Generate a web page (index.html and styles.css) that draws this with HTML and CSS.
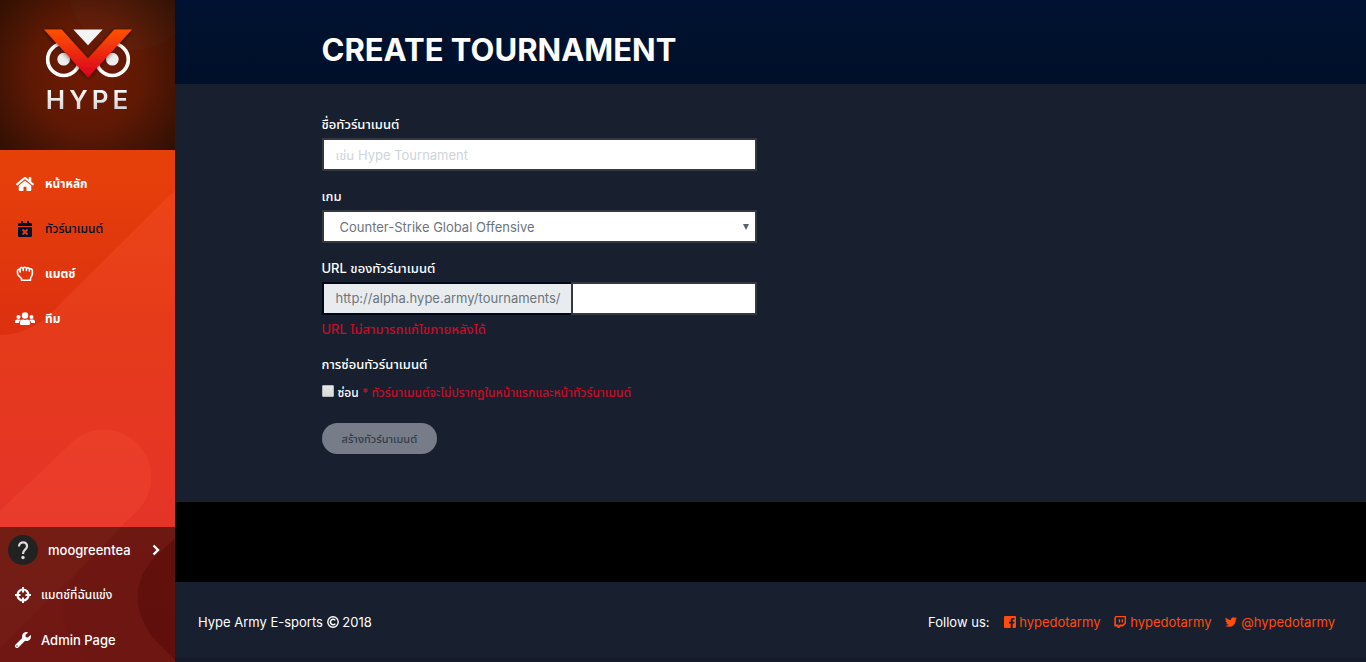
FILE: index.html
```html
<!DOCTYPE html>
<html lang="th">
<head>
    <meta charset="UTF-8">
    <meta name="viewport" content="width=device-width, initial-scale=1.0">
    <title>Create Tournament</title>
    <link rel="stylesheet" href="styles.css">
</head>
<body>
    <div class="page">
        <aside class="sidebar">
            <svg class="sidebar-shapes" viewBox="0 0 175 662" preserveAspectRatio="xMidYMin slice" aria-hidden="true">
                <path d="M175 190 L62 302 Q34 335 0 335 V662 H175 Z" fill="#ff5a3c" fill-opacity=".25"/>
                <path d="M0 511 L70 444 A47 47 0 0 1 138 510 L0 648 Z" fill="#ff5a3c" fill-opacity=".2"/>
                <circle cx="132" cy="-14" r="64" fill="#ff9060" fill-opacity=".3"/>
                <path d="M138 510 L82 568 Q40 612 88 662 H175 V527 H121 Z" fill="#8a0808" fill-opacity=".08"/>
                <path class="shade" d="M175 538 L150 562 Q124 597 152 637 L175 660 Z"/>
            </svg>
            <a class="logo" href="#">
                <svg class="owl" viewBox="0 0 264 146" aria-hidden="true">
                    <defs>
                        <linearGradient id="beak" x1="0" y1="0" x2="0" y2="1">
                            <stop offset="0" stop-color="#ff5200"/>
                            <stop offset="1" stop-color="#d8001f"/>
                        </linearGradient>
                        <filter id="shadow" x="-20%" y="-20%" width="140%" height="150%">
                            <feDropShadow dx="0" dy="3" stdDeviation="6" flood-color="#000" flood-opacity=".6"/>
                        </filter>
                    </defs>
                    <g fill="none" stroke="#fff" stroke-width="11">
                        <circle cx="59" cy="91" r="48"/>
                        <circle cx="205" cy="91" r="48"/>
                    </g>
                    <circle cx="59" cy="90" r="19" fill="#eee"/>
                    <circle cx="205" cy="90" r="19" fill="#eee"/>
                    <path d="M0 1h53l79 87 79-87h53L132 145z" fill="url(#beak)" filter="url(#shadow)"/>
                    <path d="M88 1h88l-44 47z" fill="#f4f4f4"/>
                </svg>
                <span class="logo-text">HYPE</span>
            </a>
            <nav class="menu">
                <a class="menu-item" href="#">
                    <svg class="icon" viewBox="0 0 576 512"><path d="M488 312.7V456c0 13.3-10.7 24-24 24H348c-6.6 0-12-5.4-12-12V356c0-6.6-5.4-12-12-12h-72c-6.6 0-12 5.4-12 12v112c0 6.6-5.4 12-12 12H112c-13.3 0-24-10.7-24-24V312.7c0-3.6 1.6-7 4.4-9.3l188-154.8c4.4-3.6 10.8-3.6 15.3 0l188 154.8c2.7 2.3 4.3 5.7 4.3 9.3zm83.6-60.9L488 182.9V44.4c0-6.6-5.4-12-12-12h-56c-6.6 0-12 5.4-12 12V117l-89.5-73.7c-17.7-14.6-43.3-14.6-61 0L4.4 251.8c-5.1 4.2-5.8 11.8-1.6 16.9l25.5 31c4.2 5.1 11.8 5.8 16.9 1.6l235.2-193.7c4.4-3.6 10.8-3.6 15.3 0l235.2 193.7c5.1 4.2 12.7 3.5 16.9-1.6l25.5-31c4.2-5.2 3.4-12.7-1.7-16.9z"/></svg>
                    <span>หน้าหลัก</span>
                </a>
                <a class="menu-item active" href="#">
                    <svg class="icon" viewBox="0 0 448 512"><path d="M436 160H12c-6.600 0-12-5.400-12-12v-36c0-26.500 21.500-48 48-48h48V12c0-6.600 5.400-12 12-12h40c6.600 0 12 5.400 12 12v52h128V12c0-6.600 5.400-12 12-12h40c6.600 0 12 5.400 12 12v52h48c26.500 0 48 21.500 48 48v36c0 6.600-5.400 12-12 12zM12 192h424c6.600 0 12 5.400 12 12v260c0 26.500-21.500 48-48 48H48c-26.500 0-48-21.500-48-48V204c0-6.600 5.400-12 12-12zm257.300 160l48.100-48.100c4.700-4.700 4.700-12.300 0-17l-28.300-28.300c-4.700-4.700-12.300-4.700-17 0L224 306.700l-48.100-48.100c-4.700-4.700-12.300-4.700-17 0l-28.300 28.300c-4.700 4.700-4.700 12.300 0 17l48.100 48.100-48.100 48.100c-4.700 4.700-4.700 12.300 0 17l28.300 28.300c4.700 4.700 12.300 4.700 17 0l48.100-48.100 48.100 48.100c4.700 4.700 12.300 4.700 17 0l28.300-28.300c4.700-4.700 4.700-12.300 0-17L269.300 352z"/></svg>
                    <span>ทัวร์นาเมนต์</span>
                </a>
                <a class="menu-item" href="#">
                    <svg class="icon" viewBox="0 0 18 16"><path fill="none" stroke="currentColor" stroke-width="1.600" stroke-linejoin="round" stroke-linecap="round" d="M5.500 14.200v-1.700L2.300 9.300C1.600 8.500 1.500 7.800 1.500 7V4.800c0-1.300 1.600-1.800 2.600-.9V3c0-1.500 2.300-1.900 3-.6C7.600.9 10 .9 10.500 2.400c.8-1 2.700-.6 2.900.7 1.300-.7 3 0 3 1.500v3.200c0 2-1.700 3.200-1.900 4.700v1.700zM4.100 3.900V6M7.200 2.500v2M10.400 2.500v2M13.400 3.200v2"/></svg>
                    <span>แมตช์</span>
                </a>
                <a class="menu-item" href="#">
                    <svg class="icon wide" viewBox="0 0 20 14"><circle cx="3.500" cy="5" r="2"/><circle cx="16.500" cy="5" r="2"/><circle cx="10" cy="3.500" r="3.200"/><path d="M0 11V9.500Q0 7.500 2 7.500H4.600Q5.200 7.500 5.700 7.900 4 9 3.900 11zM20 11V9.500Q20 7.500 18 7.500H15.400Q14.800 7.500 14.300 7.900 16 9 16.100 11zM5 12V10.500Q5 7.500 8 7.500 10 8.300 12 7.500 15 7.500 15 10.500V12Q15 13 14 13H6Q5 13 5 12z"/></svg>
                    <span>ทีม</span>
                </a>
            </nav>
            <nav class="account">
                <a class="account-item" href="#">
                    <span class="avatar"><svg viewBox="0 0 30 30" aria-hidden="true"><path d="M11 11.500C11 6 19.500 6 19 11.500C19 14.500 15 14.500 15 19" fill="none" stroke="currentColor" stroke-width="2.200"/><circle cx="15" cy="22.500" r="1.700" fill="currentColor"/></svg></span>
                    <span class="username">moogreentea</span>
                    <svg class="chevron" viewBox="0 0 8 12" aria-hidden="true"><path d="M1.500 1.500 6 6 1.500 10.500" fill="none" stroke="currentColor" stroke-width="2.400"/></svg>
                </a>
                <a class="account-item thai" href="#">
                    <svg class="icon" viewBox="0 0 16 16"><circle cx="8" cy="8" r="5.500" fill="none" stroke="currentColor" stroke-width="2.200"/><path d="M7 0h2v5.500H7zM7 10.500h2V16H7zM0 7h5.500v2H0zM10.500 7H16v2h-5.500z"/></svg>
                    <span>แมตช์ที่ฉันแข่ง</span>
                </a>
                <a class="account-item" href="#">
                    <svg class="icon" viewBox="0 0 512 512"><path d="M507.730 109.100c-2.240-9.030-13.540-12.090-20.120-5.510l-74.360 74.360-67.880-11.310-11.310-67.880 74.360-74.360c6.620-6.620 3.430-17.900-5.660-20.160-47.380-11.740-99.550.910-136.580 37.930-39.640 39.640-50.550 97.100-34.050 147.200L18.740 402.760c-24.990 24.990-24.990 65.510 0 90.500 24.990 24.990 65.510 24.990 90.500 0l213.210-213.210c50.120 16.710 107.470 5.680 147.370-34.220 37.070-37.070 49.700-89.320 37.910-136.730zM64 472c-13.250 0-24-10.750-24-24 0-13.260 10.750-24 24-24s24 10.740 24 24c0 13.250-10.750 24-24 24z"/></svg>
                    <span>Admin Page</span>
                </a>
            </nav>
        </aside>
        <div class="main">
            <header class="title-bar">
                <h1 class="container">CREATE TOURNAMENT</h1>
            </header>
            <main class="content">
                <div class="container columns">
                    <form class="form">
                        <div class="field">
                            <label for="name">ชื่อทัวร์นาเมนต์</label>
                            <input class="control" type="text" id="name" placeholder="เช่น Hype Tournament">
                        </div>
                        <div class="field">
                            <label for="game">เกม</label>
                            <select class="control" id="game">
                                <option>Counter-Strike Global Offensive</option>
                            </select>
                        </div>
                        <div class="field">
                            <label for="url">URL ของทัวร์นาเมนต์</label>
                            <div class="url-group">
                                <span class="prefix">http://alpha.hype.army/tournaments/</span>
                                <input class="control" type="text" id="url">
                            </div>
                            <small class="warning">URL ไม่สามารถแก้ไขภายหลังได้</small>
                        </div>
                        <fieldset class="field">
                            <legend>การซ่อนทัวร์นาเมนต์</legend>
                            <div class="check">
                                <input type="checkbox" id="hidden">
                                <label for="hidden">ซ่อน <span class="danger">* ทัวร์นาเมนต์จะไม่ปรากฏในหน้าแรกและหน้าทัวร์นาเมนต์</span></label>
                            </div>
                        </fieldset>
                        <button class="submit" type="submit" disabled>สร้างทัวร์นาเมนต์</button>
                    </form>
                </div>
            </main>
            <footer class="footer">
                <p class="copyright">Hype Army E-sports
                    <svg viewBox="0 0 12 12" aria-label="copyright"><circle cx="6" cy="6" r="5.200" fill="none" stroke="currentColor" stroke-width="1.400"/><path d="M8.300 4.400a2.700 2.700 0 1 0 0 3.200" fill="none" stroke="currentColor" stroke-width="1.600"/></svg>
                    2018</p>
                <div class="social">
                    <span>Follow us:</span>
                    <a href="#">
                        <svg viewBox="0 0 12 12"><path d="M1 0h10a1 1 0 0 1 1 1v10a1 1 0 0 1-1 1H8.700V7.500h1.500l.3-1.800H8.700V4.500c0-.6.3-.9 1-.9h.8V2.100C10 2 9.600 2 9 2 7.500 2 6.700 2.900 6.700 4.300v1.400H5v1.800h1.700V12H1a1 1 0 0 1-1-1V1a1 1 0 0 1 1-1z"/></svg>
                        hypedotarmy
                    </a>
                    <a href="#">
                        <svg viewBox="0 0 12 12"><path fill-rule="evenodd" d="M1.300 0H12v7.400L9 10.400H6.700L5 12H3.400v-1.600H.3V2.200zM1.900 1.300v7.300h2.500v1.500l1.500-1.500h2.800l1.900-1.900V1.300zM4.800 3.200h1.300v3.300H4.800zM7.700 3.200H9v3.300H7.700z"/></svg>
                        hypedotarmy
                    </a>
                    <a href="#">
                        <svg viewBox="0 32 512 448"><path d="M459.370 151.716c.325 4.548.325 9.097.325 13.645 0 138.720-105.583 298.558-298.558 298.558-59.452 0-114.680-17.219-161.137-47.106 8.447.974 16.568 1.299 25.340 1.299 49.055 0 94.213-16.568 130.274-44.832-46.132-.975-84.792-31.188-98.112-72.772 6.498.974 12.995 1.624 19.818 1.624 9.421 0 18.843-1.300 27.614-3.573-48.081-9.747-84.143-51.980-84.143-102.985v-1.299c13.969 7.797 30.214 12.670 47.431 13.319-28.264-18.843-46.781-51.005-46.781-87.391 0-19.492 5.197-37.360 14.294-52.954 51.655 63.675 129.300 105.258 216.365 109.807-1.624-7.797-2.599-15.918-2.599-24.040 0-57.828 46.782-104.934 104.934-104.934 30.213 0 57.502 12.670 76.670 33.137 23.715-4.548 46.456-13.320 66.599-25.340-7.798 24.366-24.366 44.833-46.132 57.827 21.117-2.273 41.584-8.122 60.426-16.243-14.292 20.791-32.161 39.308-52.628 54.253z"/></svg>
                        @hypedotarmy
                    </a>
                </div>
            </footer>
        </div>
    </div>
</body>
</html>
```

FILE: styles.css
```css
* {
    box-sizing: border-box;
}
body {
    margin: 0;
    background-color: #000;
    color: #fff;
    font-family: Inter, "Noto Sans Thai", "Noto Sans", sans-serif;
    font-size: 13px;
    line-height: 20px;
}
a {
    color: inherit;
    text-decoration: none;
}
svg {
    fill: currentColor;
}
.page {
    display: flex;
    min-height: 100vh;
}

/* Sidebar */
.sidebar {
    position: relative;
    display: flex;
    flex-direction: column;
    flex: 0 0 175px;
    overflow: hidden;
    background: linear-gradient(#ec4706 0%, #e6400a 25%, #dd3010 50%, #dc2820 75%, #d82020 100%);
}
.sidebar-shapes {
    position: absolute;
    top: 0;
    left: 0;
    width: 100%;
    height: 100%;
}
.shade {
    fill: #8a0000;
    fill-opacity: .3;
}
.logo {
    position: relative;
    display: flex;
    flex-direction: column;
    align-items: center;
    gap: 8px;
    height: 150px;
    padding-top: 29px;
    background: radial-gradient(circle, rgba(72, 12, 2, .75) 0%, rgba(58, 14, 3, .8) 50%, rgba(28, 10, 2, .9) 100%);
}
.owl {
    width: 88px;
    height: 49px;
    overflow: visible;
}
.logo-text {
    padding-left: 3px;
    background: linear-gradient(#fff, #ccc);
    background-clip: text;
    color: transparent;
    font-size: 26px;
    font-weight: 600;
    line-height: 28px;
    letter-spacing: 4px;
}
.menu {
    position: relative;
    flex: 1;
    padding-top: 11px;
}
.menu-item {
    display: flex;
    align-items: center;
    gap: 10px;
    height: 45px;
    padding: 0 15px;
    font-size: 12px;
    font-weight: 700;
}
.menu-item.active {
    color: #00102b;
    font-weight: 500;
}
.icon {
    flex: none;
    width: 20px;
    height: 16px;
}
.account {
    position: relative;
    background-color: rgba(0, 0, 0, .5);
}
.account-item {
    display: flex;
    align-items: center;
    gap: 10px;
    height: 45px;
    padding: 0 15px;
    font-weight: 500;
}
.account-item.thai {
    font-size: 12px;
}
.account-item .icon {
    width: 16px;
}
.account-item:first-child {
    padding-left: 8px;
}
.avatar {
    width: 30px;
    height: 30px;
    border-radius: 50%;
    background-color: #222;
    color: #ddd;
}
.username {
    flex: 1;
}
.chevron {
    width: 8px;
    height: 12px;
}

/* Main area */
.main {
    display: flex;
    flex-direction: column;
    flex: 1;
    min-width: 0;
}
.container {
    width: 100%;
    max-width: 898px;
    margin: 0 auto;
}
.title-bar {
    padding: 32px 0 16px;
    background: linear-gradient(#001232, #001028);
}
h1 {
    font-size: 31px;
    font-weight: 700;
    line-height: 36px;
}
.content {
    padding: 30px 0 48px;
    background-color: #182030;
}
.columns {
    display: grid;
    grid-template-columns: 1fr 1fr;
    gap: 28px;
}
.field {
    margin: 0 0 15px;
    padding: 0;
    border: 0;
    font-weight: 500;
}
.field label,
.field legend {
    display: block;
    padding: 0;
}
.control {
    display: block;
    width: 100%;
    height: 33px;
    margin-top: 4px;
    padding: 0 12px;
    border: 2px solid #343840;
    border-radius: 0;
    background-color: #fff;
    color: #6c757d;
    font: inherit;
    font-weight: 400;
}
.control::placeholder {
    color: #ced4da;
    opacity: 1;
}
select.control {
    padding-left: 16px;
    appearance: none;
    background-image: url("data:image/svg+xml,%3Csvg xmlns='http://www.w3.org/2000/svg' width='6' height='6'%3E%3Cpath d='M0 0h6L3 6z' fill='%23566270'/%3E%3C/svg%3E");
    background-repeat: no-repeat;
    background-position: right 6px center;
}
.url-group {
    display: flex;
    margin: 4px 0;
}
.url-group .control {
    flex: 1;
    min-width: 0;
    margin: 0;
}
.prefix {
    padding: 5px 10px 5px 12px;
    border: 2px solid #00091c;
    border-right: 0;
    background-color: #e9ecef;
    color: #6c757d;
    font-weight: 400;
    line-height: 19px;
}
.warning {
    display: block;
    color: #c90d26;
    font-size: 13px;
}
.danger {
    color: #c90d26;
}
.check {
    display: flex;
    gap: 4px;
    margin-top: 9px;
    font-size: 12px;
}
.check input {
    flex: none;
    width: 12px;
    height: 12px;
    margin: 2px 0 0;
    border: 1px solid #b8b8b8;
    border-radius: 1px;
    appearance: none;
    background: linear-gradient(#e6e6e6, #d8d8d8);
}
.check input:checked {
    background: #ff5200;
}
.submit {
    height: 31px;
    margin-top: 5px;
    padding: 0 20px;
    border: 0;
    border-radius: 16px;
    background-color: #767d89;
    color: #343b49;
    font: inherit;
    font-size: 11px;
    font-weight: 500;
}

/* Footer */
.footer {
    display: flex;
    justify-content: space-between;
    align-items: center;
    flex-wrap: wrap;
    margin-top: auto;
    padding: 30px 31px 26px 23px;
    border-bottom: 4px solid #141a29;
    background-color: #182030;
}
.copyright {
    margin: 0;
}
.footer svg {
    width: 12px;
    height: 12px;
    vertical-align: -1px;
}
.social {
    display: flex;
    gap: 14px;
}
.social a {
    color: #ff4b0c;
}
```
